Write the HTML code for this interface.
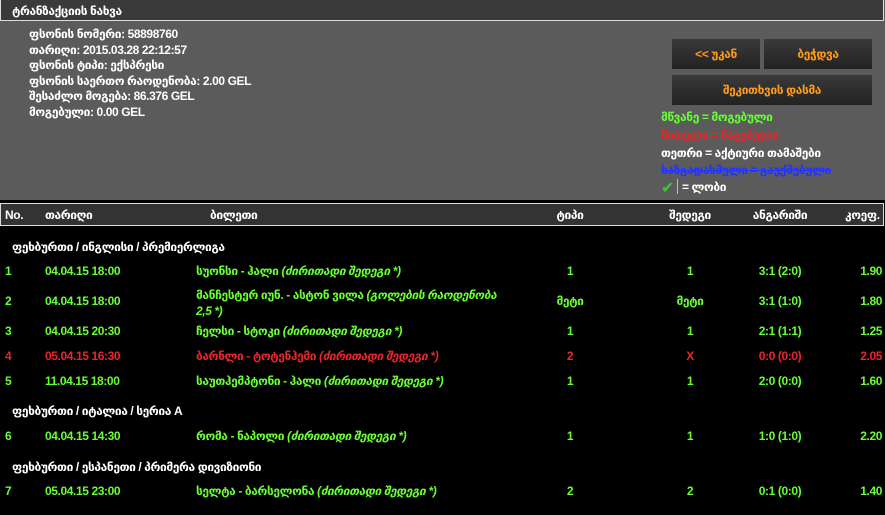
<!DOCTYPE html>
<html><head><meta charset="utf-8"><style>
body{margin:0;width:885px;height:515px;background:#000;font-family:"Liberation Sans","DejaVu Sans",sans-serif;font-size:12px;font-weight:bold;color:#fff;position:relative;overflow:hidden;letter-spacing:-0.4px}
div{position:absolute;white-space:nowrap}
.g{color:#66ff33}.r{color:#e8262a}
.btn{background:linear-gradient(#3a3a3a,#222);color:#ff9a1a;text-align:center;line-height:30px;height:30px}
i{font-style:italic}
.c{text-align:center}
</style></head><body>
<div style="left:0;top:0;width:885px;height:200px;background:#5b5b5b"></div>
<div style="left:0;top:0;width:882px;height:20px;background:#3a3a3a;border:1px solid #ddd;border-top:0"></div>
<div style="left:12px;top:4px">ტრანზაქციის ნახვა</div>
<div style="left:29px;top:27px;line-height:15.5px">ფსონის ნომერი: 58898760<br>თარიღი: 2015.03.28 22:12:57<br>ფსონის ტიპი: ექსპრესი<br>ფსონის საერთო რაოდენობა: 2.00 GEL<br>შესაძლო მოგება: 86.376 GEL<br>მოგებული: 0.00 GEL</div>
<div class="btn" style="left:672px;top:39px;width:88px">&lt;&lt; უკან</div>
<div class="btn" style="left:764px;top:39px;width:108px">ბეჭდვა</div>
<div class="btn" style="left:672px;top:75px;width:200px">შეკითხვის დასმა</div>
<div class="g" style="left:661px;top:110px">მწვანე = მოგებული</div>
<div class="r" style="left:661px;top:128px">წითელი = წაგებული</div>
<div style="left:661px;top:146px">თეთრი = აქტიური თამაშები</div>
<div style="left:661px;top:163px;color:#2233ff;text-decoration:line-through">ხაზგადასმული = გაუქმებული</div>
<div style="left:661px;top:178px;color:#33cc33;font-size:16px">✔</div>
<div style="left:677px;top:179px;width:1px;height:15px;background:#bbb"></div>
<div style="left:682px;top:180px">= ლობი</div>
<div style="left:0;top:203px;width:882px;height:21px;background:#333;border:1px solid #ddd"></div>
<div style="left:5px;top:208px">No.</div>
<div style="left:45px;top:208px">თარიღი</div>
<div style="left:210px;top:208px">ბილეთი</div>
<div class="c" style="left:540px;top:208px;width:60px">ტიპი</div>
<div class="c" style="left:660px;top:208px;width:60px">შედეგი</div>
<div class="c" style="left:740px;top:208px;width:80px">ანგარიში</div>
<div style="left:845px;top:208px">კოეფ.</div>

<div style="left:12px;top:240px">ფეხბურთი / ინგლისი / პრემიერლიგა</div>
<div class="g" style="left:5px;top:264px">1</div><div class="g" style="left:45px;top:264px">04.04.15 18:00</div><div class="g" style="left:196px;top:264px">სუონსი - ჰალი <i>(ძირითადი შედეგი *)</i></div><div class="g c" style="left:540px;top:264px;width:60px">1</div><div class="g c" style="left:660px;top:264px;width:60px">1</div><div class="g c" style="left:740px;top:264px;width:80px">3:1 (2:0)</div><div class="g" style="left:842px;top:264px;width:40px;text-align:right">1.90</div>
<div class="g" style="left:5px;top:294px">2</div><div class="g" style="left:45px;top:294px">04.04.15 18:00</div><div class="g" style="left:196px;top:287px;line-height:16px">მანჩესტერ იუნ. - ასტონ ვილა <i>(გოლების რაოდენობა</i><br><i>2,5 *)</i></div><div class="g c" style="left:540px;top:294px;width:60px">მეტი</div><div class="g c" style="left:660px;top:294px;width:60px">მეტი</div><div class="g c" style="left:740px;top:294px;width:80px">3:1 (1:0)</div><div class="g" style="left:842px;top:294px;width:40px;text-align:right">1.80</div>
<div class="g" style="left:5px;top:324px">3</div><div class="g" style="left:45px;top:324px">04.04.15 20:30</div><div class="g" style="left:196px;top:324px">ჩელსი - სტოკი <i>(ძირითადი შედეგი *)</i></div><div class="g c" style="left:540px;top:324px;width:60px">1</div><div class="g c" style="left:660px;top:324px;width:60px">1</div><div class="g c" style="left:740px;top:324px;width:80px">2:1 (1:1)</div><div class="g" style="left:842px;top:324px;width:40px;text-align:right">1.25</div>
<div class="r" style="left:5px;top:349px">4</div><div class="r" style="left:45px;top:349px">05.04.15 16:30</div><div class="r" style="left:196px;top:349px">ბარნლი - ტოტენჰემი <i>(ძირითადი შედეგი *)</i></div><div class="r c" style="left:540px;top:349px;width:60px">2</div><div class="r c" style="left:660px;top:349px;width:60px">X</div><div class="r c" style="left:740px;top:349px;width:80px">0:0 (0:0)</div><div class="r" style="left:842px;top:349px;width:40px;text-align:right">2.05</div>
<div class="g" style="left:5px;top:374px">5</div><div class="g" style="left:45px;top:374px">11.04.15 18:00</div><div class="g" style="left:196px;top:374px">საუთჰემპტონი - ჰალი <i>(ძირითადი შედეგი *)</i></div><div class="g c" style="left:540px;top:374px;width:60px">1</div><div class="g c" style="left:660px;top:374px;width:60px">1</div><div class="g c" style="left:740px;top:374px;width:80px">2:0 (0:0)</div><div class="g" style="left:842px;top:374px;width:40px;text-align:right">1.60</div>

<div style="left:12px;top:404px">ფეხბურთი / იტალია / სერია A</div>
<div class="g" style="left:5px;top:429px">6</div><div class="g" style="left:45px;top:429px">04.04.15 14:30</div><div class="g" style="left:196px;top:429px">რომა - ნაპოლი <i>(ძირითადი შედეგი *)</i></div><div class="g c" style="left:540px;top:429px;width:60px">1</div><div class="g c" style="left:660px;top:429px;width:60px">1</div><div class="g c" style="left:740px;top:429px;width:80px">1:0 (1:0)</div><div class="g" style="left:842px;top:429px;width:40px;text-align:right">2.20</div>

<div style="left:12px;top:460px">ფეხბურთი / ესპანეთი / პრიმერა დივიზიონი</div>
<div class="g" style="left:5px;top:484px">7</div><div class="g" style="left:45px;top:484px">05.04.15 23:00</div><div class="g" style="left:196px;top:484px">სელტა - ბარსელონა <i>(ძირითადი შედეგი *)</i></div><div class="g c" style="left:540px;top:484px;width:60px">2</div><div class="g c" style="left:660px;top:484px;width:60px">2</div><div class="g c" style="left:740px;top:484px;width:80px">0:1 (0:0)</div><div class="g" style="left:842px;top:484px;width:40px;text-align:right">1.40</div>
</body></html>
